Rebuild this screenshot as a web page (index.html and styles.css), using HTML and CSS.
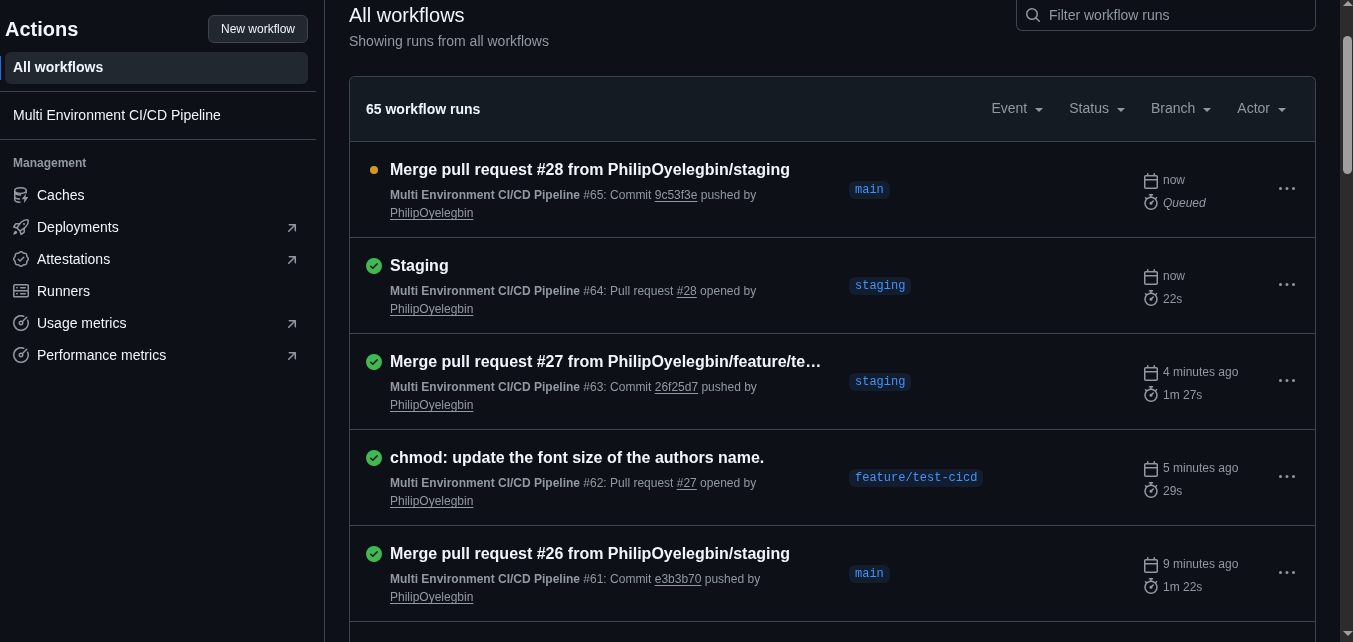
FILE: index.html
```html
<!DOCTYPE html>
<html lang="en">
<head>
  <meta charset="UTF-8" />
  <meta name="viewport" content="width=device-width, initial-scale=1.0"/>
  <title>Actions - All workflows</title>
  <link rel="stylesheet" href="styles.css">
</head>
<body>

  <svg class="icon-defs" aria-hidden="true">
    <symbol id="i-search" viewBox="0 0 16 16"><path d="M10.68 11.74a6 6 0 0 1-7.922-8.982 6 6 0 0 1 8.982 7.922l3.04 3.04a.749.749 0 0 1-.326 1.275.749.749 0 0 1-.734-.215ZM11.5 7a4.499 4.499 0 1 0-8.997 0A4.499 4.499 0 0 0 11.5 7Z"/></symbol>
    <symbol id="i-check" viewBox="0 0 16 16"><path d="M8 16A8 8 0 1 1 8 0a8 8 0 0 1 0 16Zm3.78-9.72a.751.751 0 0 0-.018-1.042.751.751 0 0 0-1.042-.018L6.75 9.19 5.28 7.72a.751.751 0 0 0-1.042.018.751.751 0 0 0-.018 1.042l2 2a.75.75 0 0 0 1.06 0Z"/></symbol>
    <symbol id="i-calendar" viewBox="0 0 16 16"><path d="M4.75 0a.75.75 0 0 1 .75.75V2h5V.75a.75.75 0 0 1 1.5 0V2h1.25c.966 0 1.75.784 1.75 1.75v10.5A1.75 1.75 0 0 1 13.25 16H2.75A1.75 1.75 0 0 1 1 14.25V3.75C1 2.784 1.784 2 2.75 2H4V.75A.75.75 0 0 1 4.75 0ZM2.5 7.5v6.75c0 .138.112.25.25.25h10.5a.25.25 0 0 0 .25-.25V7.5Zm10.75-4H2.75a.25.25 0 0 0-.25.25V6h11V3.75a.25.25 0 0 0-.25-.25Z"/></symbol>
    <symbol id="i-stopwatch" viewBox="0 0 16 16"><path d="M5.75.75A.75.75 0 0 1 6.5 0h3a.75.75 0 0 1 0 1.5h-.75v1l-.001.041a6.724 6.724 0 0 1 3.464 1.435l.007-.006.75-.75a.75.75 0 1 1 1.06 1.06l-.75.75-.006.007a6.75 6.75 0 1 1-10.548 0L2.72 5.03l-.75-.75a.75.75 0 0 1 1.06-1.06l.75.75.007.006A6.72 6.72 0 0 1 7.251 2.541V1.5H6.5a.75.75 0 0 1-.75-.75ZM8 14.5a5.25 5.25 0 1 0-.001-10.501A5.25 5.25 0 0 0 8 14.5Zm.389-6.7 1.33-1.33a.75.75 0 1 1 1.061 1.06L9.45 8.861A1.503 1.503 0 0 1 8 10.75a1.499 1.499 0 1 1 .389-2.95Z"/></symbol>
    <symbol id="i-kebab" viewBox="0 0 16 16"><path d="M8 9a1.5 1.5 0 1 0 0-3 1.5 1.5 0 0 0 0 3ZM1.5 9a1.5 1.5 0 1 0 0-3 1.5 1.5 0 0 0 0 3Zm13 0a1.5 1.5 0 1 0 0-3 1.5 1.5 0 0 0 0 3Z"/></symbol>
    <symbol id="i-arrow" viewBox="0 0 16 16"><path d="M4.53 4.75A.75.75 0 0 1 5.28 4h6.01a.75.75 0 0 1 .75.75v6.01a.75.75 0 0 1-1.5 0v-4.2l-5.26 5.261a.749.749 0 0 1-1.275-.326.749.749 0 0 1 .215-.734L9.48 5.5h-4.2a.75.75 0 0 1-.75-.75Z"/></symbol>
    <symbol id="i-cache" viewBox="0 0 16 16"><path fill="none" stroke="currentColor" stroke-width="1.5" stroke-linecap="round" d="M7.5 7.9C4.4 7.9 1.75 6.9 1.75 5.3V3.6C1.75 2 4.4.8 7.5.8s5.75 1.2 5.75 2.8c0 1.6-2.65 2.8-5.75 2.8S1.75 5.2 1.75 3.6M13.25 3.6v2.2M1.75 5.3v4.2c0 1.3 2 2.3 4.8 2.5M1.75 9.5v3.2c0 1.4 2.2 2.4 5.2 2.5"/><path d="M12.4 7.2c.2-.2.5 0 .5.2l-.4 2.6h2.2c.3 0 .4.3.3.5l-3.5 4.9c-.2.3-.6.1-.5-.2l.4-2.9H9.3c-.3 0-.4-.3-.3-.5Z"/></symbol>
    <symbol id="i-rocket" viewBox="0 0 16 16"><path d="M14.064 0h.186C15.216 0 16 .784 16 1.75v.186a8.752 8.752 0 0 1-2.564 6.186l-.458.459c-.314.314-.641.616-.979.904v3.207c0 .608-.315 1.172-.833 1.49l-2.774 1.707a.749.749 0 0 1-1.11-.418l-.954-3.102a1.214 1.214 0 0 1-.145-.125L3.754 9.816a1.218 1.218 0 0 1-.124-.145L.528 8.717a.749.749 0 0 1-.418-1.11l1.71-2.774A1.748 1.748 0 0 1 3.31 4h3.204c.288-.338.59-.665.904-.979l.459-.458A8.749 8.749 0 0 1 14.064 0ZM8.938 3.623h-.002l-.458.458c-.76.76-1.437 1.598-2.02 2.5l-1.5 2.317 2.143 2.143 2.317-1.5c.902-.583 1.74-1.26 2.499-2.02l.459-.458a7.25 7.25 0 0 0 2.123-5.127V1.75a.25.25 0 0 0-.25-.25h-.186a7.249 7.249 0 0 0-5.125 2.123ZM3.56 14.56c-.732.732-2.334 1.045-3.005 1.148a.234.234 0 0 1-.201-.064.234.234 0 0 1-.064-.201c.103-.671.416-2.273 1.15-3.003a1.502 1.502 0 1 1 2.12 2.12Zm6.94-3.935c-.088.06-.177.118-.266.175l-2.35 1.521.548 1.783 1.949-1.2a.25.25 0 0 0 .119-.213ZM3.678 8.116 5.2 5.766c.058-.09.117-.178.176-.266H3.309a.25.25 0 0 0-.213.119l-1.2 1.95ZM12 5a1 1 0 1 1-2 0 1 1 0 0 1 2 0Z"/></symbol>
    <symbol id="i-verified" viewBox="0 0 16 16"><path d="M9.585.52a2.678 2.678 0 0 0-3.17 0l-.928.68a1.178 1.178 0 0 1-.518.215L3.83 1.59a2.678 2.678 0 0 0-2.24 2.24l-.175 1.14a1.178 1.178 0 0 1-.215.518l-.68.928a2.678 2.678 0 0 0 0 3.17l.68.928c.113.153.186.33.215.518l.175 1.138a2.678 2.678 0 0 0 2.241 2.24l1.138.175c.187.029.365.102.518.215l.928.68a2.678 2.678 0 0 0 3.17 0l.928-.68a1.17 1.17 0 0 1 .518-.215l1.138-.175a2.678 2.678 0 0 0 2.241-2.241l.175-1.138c.029-.187.102-.365.215-.518l.68-.928a2.678 2.678 0 0 0 0-3.17l-.68-.928a1.179 1.179 0 0 1-.215-.518L14.41 3.83a2.678 2.678 0 0 0-2.24-2.24l-1.138-.175a1.179 1.179 0 0 1-.518-.215zM7.303 1.728c.415-.305.98-.305 1.394 0l.928.68c.348.256.752.423 1.18.489l1.136.174c.51.078.909.478.987.987l.174 1.137c.066.427.233.831.489 1.18l.68.927c.305.415.305.98 0 1.394l-.68.928a2.678 2.678 0 0 0-.489 1.18l-.174 1.136a1.178 1.178 0 0 1-.987.987l-1.137.174a2.678 2.678 0 0 0-1.18.489l-.927.68c-.415.305-.98.305-1.394 0l-.928-.68a2.678 2.678 0 0 0-1.18-.489l-1.136-.174a1.178 1.178 0 0 1-.987-.987l-.174-1.137a2.678 2.678 0 0 0-.489-1.18l-.68-.927a1.178 1.178 0 0 1 0-1.394l.68-.928c.256-.348.423-.752.489-1.18l.174-1.136c.078-.51.478-.909.987-.987l1.137-.174a2.678 2.678 0 0 0 1.18-.489zM11.28 6.78a.75.75 0 0 0-1.06-1.06L7 8.94 5.78 7.72a.75.75 0 0 0-1.06 1.06l1.75 1.75a.75.75 0 0 0 1.06 0z"/></symbol>
    <symbol id="i-server" viewBox="0 0 16 16"><path d="M1.75 1h12.5c.966 0 1.75.784 1.75 1.75v4c0 .372-.116.717-.314 1 .198.283.314.628.314 1v4a1.75 1.75 0 0 1-1.75 1.75H1.75A1.75 1.75 0 0 1 0 13.75v-4c0-.372.116-.717.314-1a1.739 1.739 0 0 1-.314-1v-4C0 1.784.784 1 1.75 1ZM1.5 2.75v4c0 .138.112.25.25.25h12.5a.25.25 0 0 0 .25-.25v-4a.25.25 0 0 0-.25-.25H1.75a.25.25 0 0 0-.25.25Zm.25 5.75a.25.25 0 0 0-.25.25v4c0 .138.112.25.25.25h12.5a.25.25 0 0 0 .25-.25v-4a.25.25 0 0 0-.25-.25ZM7 4.75A.75.75 0 0 1 7.75 4h4.5a.75.75 0 0 1 0 1.5h-4.5A.75.75 0 0 1 7 4.75ZM7.75 10h4.5a.75.75 0 0 1 0 1.5h-4.5a.75.75 0 0 1 0-1.5ZM3 4.75A.75.75 0 0 1 3.75 4h.5a.75.75 0 0 1 0 1.5h-.5A.75.75 0 0 1 3 4.75ZM3.75 10h.5a.75.75 0 0 1 0 1.5h-.5a.75.75 0 0 1 0-1.5Z"/></symbol>
    <symbol id="i-meter" viewBox="0 0 16 16"><path d="M8 1.5a6.5 6.5 0 1 0 6.016 4.035.75.75 0 0 1 1.388-.57 8 8 0 1 1-4.37-4.37.75.75 0 0 1-.569 1.389A6.473 6.473 0 0 0 8 1.5Zm6.28.22a.75.75 0 0 1 0 1.06l-4.063 4.064a2.5 2.5 0 1 1-1.06-1.06L13.22 1.72a.75.75 0 0 1 1.06 0ZM7 8a1 1 0 1 0 2 0 1 1 0 0 0-2 0Z"/></symbol>
  </svg>

  <div class="page">
    <aside class="sidebar">
      <div class="sidebar-head">
        <h2>Actions</h2>
        <button class="new-btn">New workflow</button>
      </div>
      <a class="side-item current">All workflows</a>
      <hr class="side-rule">
      <a class="side-item">Multi Environment CI/CD Pipeline</a>
      <hr class="side-rule second">
      <h3 class="side-title">Management</h3>
      <a class="side-item"><svg class="icon muted"><use href="#i-cache"/></svg>Caches</a>
      <a class="side-item"><svg class="icon muted"><use href="#i-rocket"/></svg>Deployments<svg class="icon muted side-arrow"><use href="#i-arrow"/></svg></a>
      <a class="side-item"><svg class="icon muted"><use href="#i-verified"/></svg>Attestations<svg class="icon muted side-arrow"><use href="#i-arrow"/></svg></a>
      <a class="side-item"><svg class="icon muted"><use href="#i-server"/></svg>Runners</a>
      <a class="side-item"><svg class="icon muted"><use href="#i-meter"/></svg>Usage metrics<svg class="icon muted side-arrow"><use href="#i-arrow"/></svg></a>
      <a class="side-item"><svg class="icon muted"><use href="#i-meter"/></svg>Performance metrics<svg class="icon muted side-arrow"><use href="#i-arrow"/></svg></a>
    </aside>

    <main class="content">
      <header class="content-head">
        <div>
          <h1>All workflows</h1>
          <p>Showing runs from all workflows</p>
        </div>
        <label class="filter-input">
          <svg class="icon muted"><use href="#i-search"/></svg>
          <span>Filter workflow runs</span>
        </label>
      </header>

      <section class="runs">
        <div class="runs-head">
          <strong>65 workflow runs</strong>
          <div class="filters">
            <span class="filter">Event</span>
            <span class="filter">Status</span>
            <span class="filter">Branch</span>
            <span class="filter">Actor</span>
          </div>
        </div>

        <article class="run">
          <div class="run-status"><span class="dot"></span></div>
          <div class="run-main">
            <h4>Merge pull request #28 from PhilipOyelegbin/staging</h4>
            <p><b>Multi Environment CI/CD Pipeline</b> #65: Commit <u>9c53f3e</u> pushed by <u>PhilipOyelegbin</u></p>
          </div>
          <div class="run-branch"><code>main</code></div>
          <div class="run-meta">
            <div><svg class="icon muted cal"><use href="#i-calendar"/></svg>now</div>
            <div><svg class="icon muted watch"><use href="#i-stopwatch"/></svg><i>Queued</i></div>
          </div>
          <svg class="icon muted kebab"><use href="#i-kebab"/></svg>
        </article>

        <article class="run">
          <div class="run-status"><svg class="icon ok"><use href="#i-check"/></svg></div>
          <div class="run-main">
            <h4>Staging</h4>
            <p><b>Multi Environment CI/CD Pipeline</b> #64: Pull request <u>#28</u> opened by <u>PhilipOyelegbin</u></p>
          </div>
          <div class="run-branch"><code>staging</code></div>
          <div class="run-meta">
            <div><svg class="icon muted cal"><use href="#i-calendar"/></svg>now</div>
            <div><svg class="icon muted watch"><use href="#i-stopwatch"/></svg>22s</div>
          </div>
          <svg class="icon muted kebab"><use href="#i-kebab"/></svg>
        </article>

        <article class="run">
          <div class="run-status"><svg class="icon ok"><use href="#i-check"/></svg></div>
          <div class="run-main">
            <h4>Merge pull request #27 from PhilipOyelegbin/feature/test-cicd</h4>
            <p><b>Multi Environment CI/CD Pipeline</b> #63: Commit <u>26f25d7</u> pushed by <u>PhilipOyelegbin</u></p>
          </div>
          <div class="run-branch"><code>staging</code></div>
          <div class="run-meta">
            <div><svg class="icon muted cal"><use href="#i-calendar"/></svg>4 minutes ago</div>
            <div><svg class="icon muted watch"><use href="#i-stopwatch"/></svg>1m 27s</div>
          </div>
          <svg class="icon muted kebab"><use href="#i-kebab"/></svg>
        </article>

        <article class="run">
          <div class="run-status"><svg class="icon ok"><use href="#i-check"/></svg></div>
          <div class="run-main">
            <h4>chmod: update the font size of the authors name.</h4>
            <p><b>Multi Environment CI/CD Pipeline</b> #62: Pull request <u>#27</u> opened by <u>PhilipOyelegbin</u></p>
          </div>
          <div class="run-branch"><code>feature/test-cicd</code></div>
          <div class="run-meta">
            <div><svg class="icon muted cal"><use href="#i-calendar"/></svg>5 minutes ago</div>
            <div><svg class="icon muted watch"><use href="#i-stopwatch"/></svg>29s</div>
          </div>
          <svg class="icon muted kebab"><use href="#i-kebab"/></svg>
        </article>

        <article class="run">
          <div class="run-status"><svg class="icon ok"><use href="#i-check"/></svg></div>
          <div class="run-main">
            <h4>Merge pull request #26 from PhilipOyelegbin/staging</h4>
            <p><b>Multi Environment CI/CD Pipeline</b> #61: Commit <u>e3b3b70</u> pushed by <u>PhilipOyelegbin</u></p>
          </div>
          <div class="run-branch"><code>main</code></div>
          <div class="run-meta">
            <div><svg class="icon muted cal"><use href="#i-calendar"/></svg>9 minutes ago</div>
            <div><svg class="icon muted watch"><use href="#i-stopwatch"/></svg>1m 22s</div>
          </div>
          <svg class="icon muted kebab"><use href="#i-kebab"/></svg>
        </article>

        <article class="run"></article>
      </section>
    </main>

    <div class="scrollbar">
      <span class="arrow-up"></span>
      <span class="thumb"></span>
      <span class="arrow-down"></span>
    </div>
  </div>

</body>
</html>
```

FILE: styles.css
```css
html, body {
  margin: 0;
  height: 642px;
  overflow: hidden;
}

body {
  font-family: "Liberation Sans", Arial, sans-serif;
  font-size: 14px;
  background: #0d1117;
  color: #f0f6fc;
}

.icon-defs {
  display: none;
}

.icon {
  width: 16px;
  height: 16px;
  flex: none;
  fill: currentColor;
}

.muted {
  color: #9198a1;
}

.ok {
  color: #3fb950;
}

.page {
  display: flex;
  height: 642px;
  will-change: transform;
}

/* Sidebar */
.sidebar {
  width: 316px;
  flex: none;
  padding-right: 8px;
  border-right: 1px solid #3d444d;
}

.sidebar-head {
  display: flex;
  justify-content: space-between;
  align-items: center;
  margin: 15px 8px 9px 5px;
}

.sidebar-head h2 {
  margin: 0;
  font-size: 20px;
  font-weight: bold;
}

.new-btn {
  height: 28px;
  width: 100px;
  padding: 0;
  font-family: inherit;
  font-size: 12px;
  color: #f0f6fc;
  background: #212830;
  border: 1px solid #3d444d;
  border-radius: 6px;
}

.side-item {
  display: flex;
  align-items: center;
  gap: 8px;
  height: 32px;
  margin: 0 8px 0 5px;
  padding: 0 8px;
  border-radius: 6px;
  color: #f0f6fc;
}

.side-item.current {
  position: relative;
  box-sizing: border-box;
  padding-bottom: 2px;
  font-weight: bold;
  background: #212830;
}

.side-item.current::before {
  content: "";
  position: absolute;
  left: -5px;
  top: 4px;
  width: 1px;
  height: 24px;
  background: #1f6feb;
}

.side-rule {
  margin: 7px 0;
  border: 0;
  border-top: 1px solid #3d444d;
}

.side-rule.second {
  margin-top: 8px;
}

.side-title {
  margin: 0;
  padding: 9px 13px 9px;
  font-size: 12px;
  line-height: 14px;
  font-weight: bold;
  color: #9198a1;
}

.side-arrow {
  margin-left: auto;
  margin-top: 2px;
}

/* Main column */
.content {
  flex: 1;
  min-width: 0;
  padding: 0 24px;
  overflow: hidden;
}

.content-head {
  display: flex;
  justify-content: space-between;
  align-items: flex-start;
  height: 76px;
}

.content-head h1 {
  margin: 0;
  font-size: 20px;
  line-height: 30px;
  font-weight: normal;
}

.content-head p {
  margin: 1px 0 0;
  line-height: 21px;
  color: #9198a1;
}

.filter-input {
  display: flex;
  align-items: center;
  gap: 8px;
  box-sizing: border-box;
  width: 300px;
  height: 31px;
  padding: 0 8px;
  border: 1px solid #3d444d;
  border-top: 0;
  border-radius: 0 0 6px 6px;
  color: #9198a1;
}

.runs {
  border: 1px solid #3d444d;
  border-bottom: 0;
  border-radius: 6px 6px 0 0;
}

.runs-head {
  display: flex;
  justify-content: space-between;
  align-items: center;
  height: 64px;
  padding: 0 29px 0 16px;
  background: #151b23;
  border-radius: 6px 6px 0 0;
}

.filters {
  display: flex;
  gap: 26px;
  margin-bottom: 2px;
  color: #9198a1;
}

.filter::after {
  content: "";
  display: inline-block;
  margin: 2px 0 0 8px;
  vertical-align: middle;
  border-top: 4px solid currentColor;
  border-left: 4px solid transparent;
  border-right: 4px solid transparent;
}

.run {
  display: flex;
  box-sizing: border-box;
  height: 96px;
  padding: 17px 20px 0 16px;
  border-top: 1px solid #3d444d;
}

.run-status {
  display: flex;
  justify-content: center;
  width: 16px;
  margin-right: 8px;
  padding-top: 3px;
}

.dot {
  width: 8px;
  height: 8px;
  margin-top: 4px;
  border-radius: 50%;
  background: #d29922;
}

.run-main {
  box-sizing: border-box;
  width: 459px;
  padding-right: 24px;
}

.run-main h4 {
  margin: 0 0 5px;
  font-size: 16px;
  line-height: 22px;
  white-space: nowrap;
  overflow: hidden;
  text-overflow: ellipsis;
}

.run-main p {
  margin: 0;
  font-size: 12px;
  line-height: 18px;
  color: #9198a1;
}

.run-main u {
  text-underline-offset: 2px;
}

.run-branch {
  width: 294px;
  padding-top: 21px;
}

.run-branch code {
  display: inline-block;
  padding: 0 6px;
  font-family: "Liberation Mono", monospace;
  font-size: 12px;
  line-height: 18px;
  color: #4493f8;
  background: #121d2f;
  border-radius: 6px;
}

.run-meta {
  flex: 1;
  padding-top: 9px;
  font-size: 12px;
  color: #9198a1;
}

.run-meta div {
  display: flex;
  align-items: center;
  gap: 4px;
  height: 23px;
}

.run-meta .cal {
  margin-top: 2px;
}

.run-meta .watch {
  margin-bottom: 2px;
}

.kebab {
  margin-top: 22px;
}

/* Browser scrollbar as it shows in the screenshot */
.scrollbar {
  position: relative;
  width: 13px;
  flex: none;
  background: #2c2c2c;
}

.thumb {
  position: absolute;
  top: 36px;
  left: 3px;
  width: 9px;
  height: 138px;
  background: #9f9f9f;
  border-radius: 5px;
}

.arrow-up,
.arrow-down {
  position: absolute;
  left: 3px;
  border-left: 5px solid transparent;
  border-right: 5px solid transparent;
}

.arrow-up {
  top: 1px;
  border-bottom: 5px solid #9f9f9f;
}

.arrow-down {
  bottom: 6px;
  border-top: 5px solid #9f9f9f;
}
```
